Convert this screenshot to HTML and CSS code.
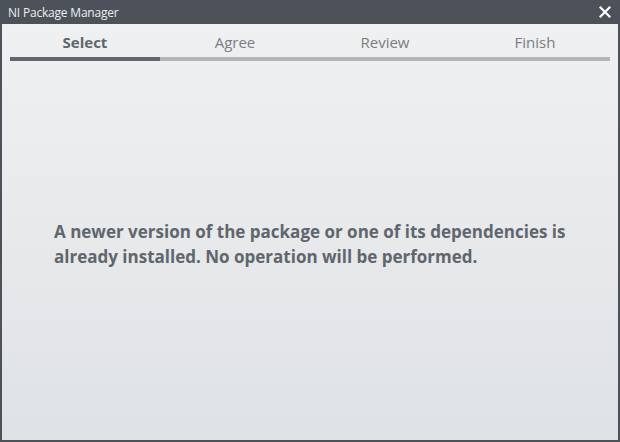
FILE: index.html
```html
<!DOCTYPE html>
<html>
<head>
<meta charset="utf-8">
<link rel="stylesheet" href="styles.css">
</head>
<body>
<div class="window">
  <div class="titlebar">
    <span class="title">NI Package Manager</span>
    <svg class="close" width="12" height="12" viewBox="0 0 12 12"><path d="M1.5 1.5 L10.5 10.5 M10.5 1.5 L1.5 10.5" stroke="#ffffff" stroke-width="2.2" stroke-linecap="square"/></svg>
  </div>
  <div class="content">
    <div class="steps">
      <div class="step active">Select</div>
      <div class="step">Agree</div>
      <div class="step">Review</div>
      <div class="step">Finish</div>
    </div>
    <div class="progress"><div class="progress-fill"></div></div>
    <div class="message">A newer version of the package or one of its dependencies is already installed. No operation will be performed.</div>
  </div>
</div>
</body>
</html>
```
FILE: styles.css
```css
* { box-sizing: border-box; }
html, body { margin: 0; padding: 0; }
body { width: 620px; height: 442px; overflow: hidden; font-family: "Open Sans", "Noto Sans", sans-serif; }
.window {
  width: 620px; height: 442px;
  background: #4d525a;
  display: flex; flex-direction: column;
  padding: 0 2px 2px 2px;
}
.titlebar {
  height: 24px; flex: none;
  display: flex; align-items: center; justify-content: space-between;
  padding: 0 7px 0 6px;
}
.title { color: #eceef0; font-size: 12px; letter-spacing: -0.2px; }
.close { display: block; }
.content {
  flex: 1;
  background: linear-gradient(#eff0f1, #dfe2e5);
  display: flex; flex-direction: column;
  padding: 0 8px;
}
.steps { display: grid; grid-template-columns: repeat(4, 1fr); height: 33px; align-items: center; padding-top: 3px; }
.step { text-align: center; font-size: 15px; color: #7a7e83; }
.step.active { font-weight: 700; color: #5f666d; }
.progress { height: 4px; background: #b6b6b6; }
.progress-fill { width: 25%; height: 100%; background: #5f666d; }
.message {
  margin: 158px 40px 0 44px;
  font-size: 17px; font-weight: 700; line-height: 25px; color: #5f666d;
}
```
